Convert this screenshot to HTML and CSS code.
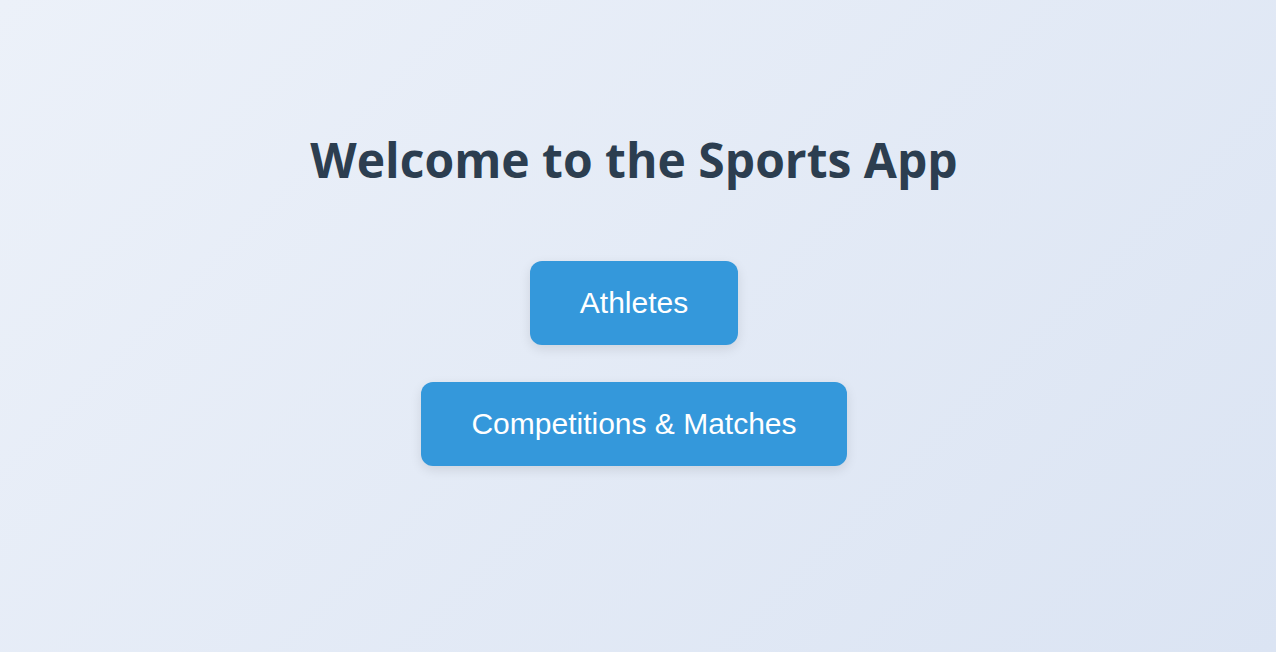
FILE: index.html
```html
<!DOCTYPE html>
<html lang="en">
<head>
<meta charset="utf-8">
<title>Sports App</title>
<link rel="stylesheet" href="styles.css">
</head>
<body>
<main class="home">
  <h1 class="home-title">Welcome to the Sports App</h1>
  <nav class="home-nav">
    <a class="home-btn" href="#">Athletes</a>
    <a class="home-btn" href="#">Competitions &amp; Matches</a>
  </nav>
</main>
</body>
</html>
```

FILE: styles.css
```css
html, body {
  margin: 0;
  padding: 0;
  height: 100%;
}

body {
  background: linear-gradient(135deg, #ecf1f9 0%, #dbe4f3 100%);
  font-family: "Liberation Sans", Arial, sans-serif;
}

.home {
  min-height: 100%;
  box-sizing: border-box;
  display: flex;
  flex-direction: column;
  align-items: center;
  padding: 126px 8px 0 0;
}

.home-title {
  margin: 0;
  font-family: "Open Sans", "Noto Sans", sans-serif;
  font-weight: 700;
  font-size: 48px;
  line-height: 68px;
  color: #2c3e50;
}

.home-nav {
  display: flex;
  flex-direction: column;
  align-items: center;
  gap: 37px;
  margin-top: 67px;
}

.home-btn {
  display: block;
  padding: 25px 50px;
  font-size: 30px;
  line-height: 34px;
  color: #ffffff;
  background: #3498db;
  border-radius: 12px;
  text-decoration: none;
  box-shadow: 0 4px 12px rgba(0, 0, 0, 0.1);
}
```
